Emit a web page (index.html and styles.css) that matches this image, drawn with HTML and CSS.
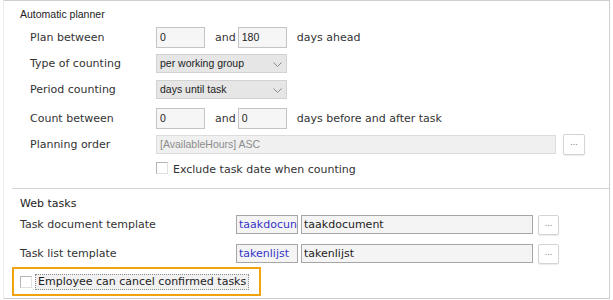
FILE: index.html
```html
<!DOCTYPE html>
<html lang="en">
<head>
    <meta charset="UTF-8">
    <title>Planner settings</title>
    <link rel="stylesheet" href="styles.css">
</head>
<body>
    <div class="frame">
        <div class="group-title">Automatic planner</div>

        <div class="planner">
            <div class="row">
                <span class="label">Plan between</span>
                <div class="field num">0</div>
                <span class="joiner">and</span>
                <div class="field num">180</div>
                <span class="suffix">days ahead</span>
            </div>

            <div class="row">
                <span class="label">Type of counting</span>
                <div class="select">
                    per working group
                    <svg class="chevron" width="9" height="5" viewBox="0 0 9 5"><polyline points="0.5,0.5 4.5,4.5 8.5,0.5" fill="none" stroke="#8a8a8a" stroke-width="1"/></svg>
                </div>
            </div>

            <div class="row">
                <span class="label">Period counting</span>
                <div class="select">
                    days until task
                    <svg class="chevron" width="9" height="5" viewBox="0 0 9 5"><polyline points="0.5,0.5 4.5,4.5 8.5,0.5" fill="none" stroke="#8a8a8a" stroke-width="1"/></svg>
                </div>
            </div>

            <div class="row spaced">
                <span class="label">Count between</span>
                <div class="field num">0</div>
                <span class="joiner">and</span>
                <div class="field num">0</div>
                <span class="suffix">days before and after task</span>
            </div>

            <div class="row">
                <span class="label">Planning order</span>
                <div class="field readonly">[AvailableHours] ASC</div>
                <button class="dots-btn">...</button>
            </div>

            <div class="row check-row">
                <span class="label"></span>
                <span class="checkbox"></span>
                <span class="check-label">Exclude task date when counting</span>
            </div>
        </div>

        <div class="separator"></div>

        <div class="group-title web">Web tasks</div>

        <div class="web-tasks">
            <div class="row">
                <span class="label wide">Task document template</span>
                <div class="field code">taakdocun</div>
                <div class="field template">taakdocument</div>
                <button class="dots-btn small">...</button>
            </div>

            <div class="row">
                <span class="label wide">Task list template</span>
                <div class="field code">takenlijst</div>
                <div class="field template">takenlijst</div>
                <button class="dots-btn small">...</button>
            </div>
        </div>

        <div class="highlight">
            <span class="checkbox"></span>
            <span class="focus-label">Employee can cancel confirmed tasks</span>
        </div>
    </div>
</body>
</html>
```

FILE: styles.css
```css
body {
    margin: 0;
    background: #fff;
    font-family: 'DejaVu Sans', Verdana, sans-serif;
    font-size: 11px;
    color: #333;
}

.frame {
    margin-left: 3px;
    width: 605px;
    border: 1px solid #cfcfcf;
    border-left-color: #ececec;
    padding-bottom: 2px;
}

.group-title {
    font-family: 'Liberation Sans', Arial, sans-serif;
    font-size: 10.5px;
    line-height: 13px;
    color: #222;
    margin: 7px 0 0 16px;
}

.group-title.web {
    font-family: 'DejaVu Sans', Verdana, sans-serif;
    font-size: 11px;
    margin-top: 8px;
}

.planner {
    padding-left: 26px;
    margin-top: 6px;
}

.row {
    display: flex;
    align-items: center;
    height: 21px;
    margin-bottom: 5px;
}

/* sibling margins collapse, so this is the full gap above the row */
.row.spaced {
    margin-top: 8px;
}

.row.check-row {
    height: 16px;
    margin-bottom: 0;
}

.label {
    width: 126px;
    flex-shrink: 0;
}

.label.wide {
    width: 216px;
}

.field {
    box-sizing: border-box;
    height: 21px;
    line-height: 19px;
    padding: 0 3px;
    border: 1px solid #c4c4c4;
    background: #f6f6f6;
    white-space: nowrap;
    overflow: hidden;
}

.num {
    width: 49px;
    font-family: 'Liberation Sans', Arial, sans-serif;
    font-size: 10.5px;
    color: #222;
}

.joiner {
    margin: 0 2px 0 10px;
}

.suffix {
    margin-left: 10px;
}

.select {
    box-sizing: border-box;
    position: relative;
    width: 131px;
    height: 19px;
    line-height: 17px;
    padding: 0 3px;
    border: 1px solid #d2d2d2;
    background: #e6e6e6;
    font-family: 'Liberation Sans', Arial, sans-serif;
    font-size: 10.5px;
    color: #222;
}

.chevron {
    position: absolute;
    right: 4px;
    top: 7px;
}

.readonly {
    width: 400px;
    height: 19px;
    line-height: 17px;
    border-color: #dcdcdc;
    background: #f0f0f0;
    color: #8c8c8c;
    font-family: 'Liberation Sans', Arial, sans-serif;
    font-size: 10.5px;
}

.dots-btn {
    box-sizing: border-box;
    width: 22px;
    height: 21px;
    margin-left: 7px;
    padding: 0 0 3px;
    border: 1px solid #d4d4d4;
    border-radius: 2px;
    background: #fff;
    box-shadow: 0 1px 1px rgba(0,0,0,0.08);
    color: #777;
    font-family: 'DejaVu Sans', sans-serif;
    font-size: 8px;
    line-height: 16px;
}

.dots-btn.small {
    width: 21px;
    height: 20px;
    margin-left: 5px;
}

.checkbox {
    box-sizing: border-box;
    width: 12px;
    height: 12px;
    border: 1px solid #b4b4b4;
    border-right-color: #e0e0e0;
    border-bottom-color: #e0e0e0;
    background: #fff;
    flex-shrink: 0;
}

.check-label {
    margin-left: 5px;
    padding-top: 3px;
}

.separator {
    height: 1px;
    background: #d6d6d6;
    margin: 12px 0 0 8px;
}

.web-tasks {
    padding-left: 16px;
    margin-top: 4px;
}

.web-tasks .row {
    margin-bottom: 8px;
}

.web-tasks .row:last-child {
    margin-bottom: 0;
}

.code {
    width: 62px;
    height: 19px;
    line-height: 17px;
    padding: 0 2px;
    border-color: #a6a6a6;
    background: #f4f4f4;
    color: #3434c8;
}

.template {
    width: 232px;
    height: 19px;
    line-height: 17px;
    margin-left: 3px;
    padding: 0 2px;
    border-color: #a6a6a6;
    background: #f4f4f4;
    color: #222;
}

.highlight {
    box-sizing: border-box;
    display: flex;
    align-items: center;
    width: 249px;
    height: 29px;
    margin: 3px 0 0 8px;
    padding-left: 6px;
    border: 2px solid #f0a30a;
}

.focus-label {
    margin-left: 3px;
    padding: 0 2px;
    line-height: 14px;
    border: 1px dotted #8a8a8a;
    background: #f1f1f1;
    color: #222;
    font-size: 11px;
}
```
